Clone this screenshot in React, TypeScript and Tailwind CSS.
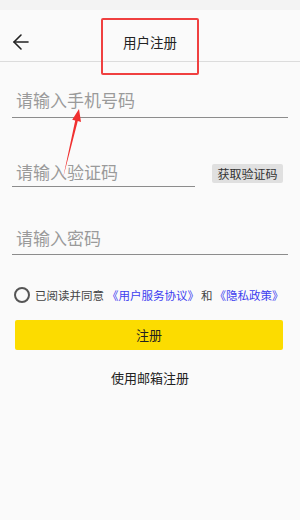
import { ArrowLeft } from "lucide-react";

const font = { fontFamily: '"Noto Sans CJK SC", "Noto Sans", sans-serif' };

export default function App() {
  return (
    <div
      className="relative h-[520px] w-[300px] overflow-hidden bg-[#fafafa] text-[#222]"
      style={font}
    >
      {/* status strip */}
      <div className="h-[10px] bg-[#f3f3f3]" />

      {/* header */}
      <div className="flex h-[52px] items-center border-b border-[#dcdcdc] pt-[12px]">
        <div className="flex w-[40px] justify-start pl-[9px]">
          <ArrowLeft size={24} strokeWidth={1.6} className="text-[#222]" />
        </div>
        <div className="flex-1 text-center text-[13.5px] leading-[20px] text-[#222]">用户注册</div>
        <div className="w-[40px]" />
      </div>

      {/* form */}
      <div className="px-[12px]">
        <div className="mt-[26px] border-b border-[#8c8c8c] pb-[5px] pl-[4px] text-[17px] leading-[24px] text-[#9a9a9a]">
          请输入手机号码
        </div>

        <div className="mt-[42px] flex items-center">
          <div className="w-[183px] border-b border-[#8c8c8c] pb-[2px] pl-[4px] text-[17px] leading-[24px] text-[#9a9a9a]">
            请输入验证码
          </div>
          <button className="ml-[17px] h-[19px] w-[71px] rounded-[2px] bg-[#e0e0e0] text-[12px] leading-[19px] text-[#333]">
            获取验证码
          </button>
        </div>

        <div className="mt-[39px] border-b border-[#8c8c8c] pb-[4px] pl-[4px] text-[17px] leading-[24px] text-[#9a9a9a]">
          请输入密码
        </div>

        <div className="ml-[2px] mt-[32px] flex items-center text-[11.5px] leading-[16px]">
          <span className="h-[16px] w-[16px] shrink-0 rounded-full border-2 border-[#555]" />
          <span className="ml-[5px] text-[#444]">已阅读并同意</span>
          <span className="ml-[3px] text-[#3d3df0]">《用户服务协议》</span>
          <span className="mx-[2px] text-[#444]">和</span>
          <span className="text-[#3d3df0]">《隐私政策》</span>
        </div>

        <button className="ml-[3px] mt-[17px] h-[30px] w-[268px] rounded-[2px] bg-[#fcdc00] text-[13px] text-[#222]">
          注册
        </button>

        <div className="mt-[18px] text-center text-[13px] leading-[20px] text-[#222]">使用邮箱注册</div>
      </div>

      {/* annotation: red box */}
      <div className="absolute left-[101px] top-[18px] h-[57px] w-[98px] rounded-[2px] border-2 border-[#f04040]" />

      {/* annotation: red arrow */}
      <svg className="absolute left-0 top-0" width="300" height="520" viewBox="0 0 300 520">
        <polygon
          points="79,109 81,122 77.8,121 63,178 75.2,120.4 72.2,119.8"
          fill="#f03030"
        />
      </svg>
    </div>
  );
}
